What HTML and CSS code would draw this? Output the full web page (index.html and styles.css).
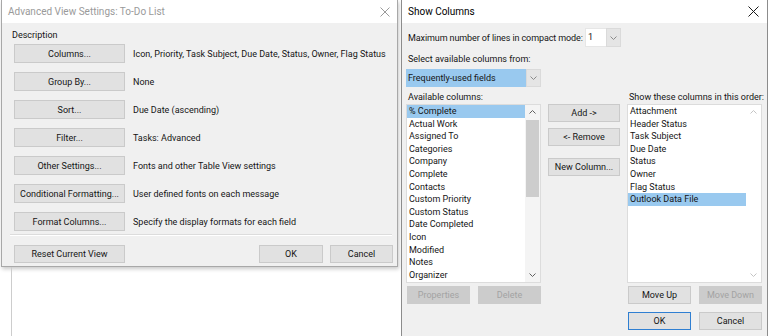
FILE: index.html
```html
<!DOCTYPE html>
<html lang="en">
<head>
  <meta charset="UTF-8">
  <title>Advanced View Settings</title>
  <link rel="stylesheet" href="styles.css">
</head>
<body>
<div class="left-col">
  <div class="dlg dlg-adv">
    <div class="titlebar inactive">
      <span>Advanced View Settings: To-Do List</span>
      <svg class="close" width="10" height="10" viewBox="0 0 10 10"><path d="M0.5 0.5L9.5 9.5M9.5 0.5L0.5 9.5" stroke="#9a9a9a" stroke-width="1"/></svg>
    </div>
    <div class="adv-body">
      <div class="group-label">Description</div>
      <div class="adv-rows">
        <div class="adv-row"><button class="btn btn-wide">Columns...</button><span>Icon, Priority, Task Subject, Due Date, Status, Owner, Flag Status</span></div>
        <div class="adv-row"><button class="btn btn-wide">Group By...</button><span>None</span></div>
        <div class="adv-row"><button class="btn btn-wide">Sort...</button><span>Due Date (ascending)</span></div>
        <div class="adv-row"><button class="btn btn-wide">Filter...</button><span>Tasks: Advanced</span></div>
        <div class="adv-row"><button class="btn btn-wide">Other Settings...</button><span>Fonts and other Table View settings</span></div>
        <div class="adv-row"><button class="btn btn-wide">Conditional Formatting...</button><span>User defined fonts on each message</span></div>
        <div class="adv-row"><button class="btn btn-wide">Format Columns...</button><span>Specify the display formats for each field</span></div>
      </div>
      <div class="separator"></div>
      <div class="adv-footer">
        <button class="btn btn-wide">Reset Current View</button>
        <div class="footer-right">
          <button class="btn btn-ok">OK</button>
          <button class="btn btn-cancel">Cancel</button>
        </div>
      </div>
    </div>
  </div>
  <div class="app-pane"></div>
</div>

<div class="dlg dlg-cols">
  <div class="titlebar">
    <span>Show Columns</span>
    <svg class="close" width="11" height="11" viewBox="0 0 11 11"><path d="M0.5 0.5L10.5 10.5M10.5 0.5L0.5 10.5" stroke="#1a1a1a" stroke-width="1"/></svg>
  </div>
  <div class="cols-body">
    <div class="row-lines">
      <span class="lines-label">Maximum number of lines in compact mode:</span>
      <div class="combo combo-small">
        <span class="combo-val">1</span>
        <span class="combo-btn"><svg width="7" height="4" viewBox="0 0 7 4"><path d="M0.5 0.5L3.5 3.5L6.5 0.5" fill="none" stroke="#8a8a8a"/></svg></span>
      </div>
    </div>
    <div class="lbl lbl-select">Select available columns from:</div>
    <div class="combo combo-wide">
      <span class="combo-val selected">Frequently-used fields</span>
      <span class="combo-btn"><svg width="7" height="4" viewBox="0 0 7 4"><path d="M0.5 0.5L3.5 3.5L6.5 0.5" fill="none" stroke="#8a8a8a"/></svg></span>
    </div>

    <div class="cols-grid">
      <div class="lbl">Available columns:</div>
      <div></div>
      <div class="lbl">Show these columns in this order:</div>

      <div class="listbox">
        <ul class="items">
          <li class="selected">% Complete</li>
          <li>Actual Work</li>
          <li>Assigned To</li>
          <li>Categories</li>
          <li>Company</li>
          <li>Complete</li>
          <li>Contacts</li>
          <li>Custom Priority</li>
          <li>Custom Status</li>
          <li>Date Completed</li>
          <li>Icon</li>
          <li>Modified</li>
          <li>Notes</li>
          <li>Organizer</li>
        </ul>
        <div class="scrollbar">
          <svg class="arrow" width="7" height="4" viewBox="0 0 7 4"><path d="M0.5 3.5L3.5 0.5L6.5 3.5" fill="none" stroke="#606060"/></svg>
          <div class="track"><div class="thumb"></div></div>
          <svg class="arrow" width="7" height="4" viewBox="0 0 7 4"><path d="M0.5 0.5L3.5 3.5L6.5 0.5" fill="none" stroke="#606060"/></svg>
        </div>
      </div>

      <div class="mid-btns">
        <button class="btn">Add -&gt;</button>
        <button class="btn">&lt;- Remove</button>
        <button class="btn btn-newcol">New Column...</button>
      </div>

      <div class="listbox">
        <ul class="items">
          <li>Attachment</li>
          <li>Header Status</li>
          <li>Task Subject</li>
          <li>Due Date</li>
          <li>Status</li>
          <li>Owner</li>
          <li>Flag Status</li>
          <li class="selected">Outlook Data File</li>
        </ul>
        <div class="scrollbar scrollbar-off">
          <svg class="arrow" width="7" height="4" viewBox="0 0 7 4"><path d="M0.5 3.5L3.5 0.5L6.5 3.5" fill="none" stroke="#c4c4c4"/></svg>
          <div class="track"></div>
          <svg class="arrow" width="7" height="4" viewBox="0 0 7 4"><path d="M0.5 0.5L3.5 3.5L6.5 0.5" fill="none" stroke="#c4c4c4"/></svg>
        </div>
      </div>

      <div class="pair">
        <button class="btn" disabled>Properties</button>
        <button class="btn" disabled>Delete</button>
      </div>
      <div></div>
      <div class="pair">
        <button class="btn">Move Up</button>
        <button class="btn" disabled>Move Down</button>
      </div>

      <div></div>
      <div></div>
      <div class="pair">
        <button class="btn btn-default">OK</button>
        <button class="btn">Cancel</button>
      </div>
    </div>
  </div>
</div>
</body>
</html>
```

FILE: styles.css
```css
* {
  box-sizing: border-box;
}
body {
  margin: 0;
  width: 768px;
  height: 336px;
  overflow: hidden;
  background: #fff;
  font-family: Roboto, 'Noto Sans', sans-serif;
  font-size: 9px;
  color: #151515;
  display: flex;
  align-items: stretch;
}
button {
  font-family: inherit;
  font-size: 9px;
  color: #151515;
  margin: 0;
  padding: 0;
}

/* windows */
.left-col {
  width: 400px;
  display: flex;
  flex-direction: column;
}
.app-pane {
  flex: 1;
  margin-left: 11px;
  border-left: 1px solid #cdcdcd;
}
.dlg {
  background: #f0f0f0;
  border: 1px solid #a8a8a8;
  border-top: none;
}
.dlg-adv {
  margin-left: 1px;
  width: 397px;
  box-shadow: 1px 2px 4px rgba(0, 0, 0, 0.22);
}
.dlg-cols {
  margin-left: 1px;
  width: 367px;
  border-color: #8c8c8c;
  border-bottom: none;
}
.titlebar {
  height: 23px;
  background: #fff;
  display: flex;
  align-items: center;
  justify-content: space-between;
  padding: 0 7px 0 6px;
  font-size: 10px;
  color: #000;
}
.titlebar.inactive {
  color: #9a9a9a;
}
.dlg-cols .titlebar {
  padding-left: 6px;
  padding-right: 8px;
}

/* advanced view settings */
.adv-body {
  padding: 6px 4px 3px 12px;
}
.group-label {
  line-height: 12px;
  height: 12px;
  margin-left: -2px;
}
.adv-rows {
  margin-top: 3px;
  display: flex;
  flex-direction: column;
  gap: 9px;
}
.adv-row {
  display: flex;
  align-items: center;
  gap: 8px;
}
.btn {
  height: 18px;
  background: #e1e1e1;
  border: 1px solid #cacaca;
  text-align: center;
  white-space: nowrap;
  line-height: 16px;
}
.btn:disabled {
  background: #cccccc;
  border-color: #cccccc;
  color: #a3a3a3;
}
.btn-wide {
  width: 111px;
  height: 19px;
}
.separator {
  margin: 3px 1px 0 -4px;
  background: #dcdcdc;
  border-bottom: 1px solid #fff;
  height: 2px;
}
.adv-footer {
  margin-top: 9px;
  display: flex;
  justify-content: space-between;
}
.adv-footer .btn {
  height: 18px;
}
.footer-right {
  display: flex;
  gap: 7px;
}
.btn-ok {
  width: 64px;
}
.btn-cancel {
  width: 63px;
}

/* show columns */
.cols-body {
  padding: 5px 4px 0 4px;
}
.row-lines {
  display: flex;
  align-items: center;
  height: 19px;
}
.lines-label {
  width: 179px;
  padding-left: 2px;
  white-space: nowrap;
  letter-spacing: -0.1px;
}
.lbl {
  line-height: 12px;
  height: 12px;
  padding-left: 2px;
  white-space: nowrap;
}
.lbl-select {
  margin-top: 6px;
}
.combo {
  display: flex;
  height: 19px;
}
.combo-small {
  width: 36px;
}
.combo-small .combo-val {
  width: 21px;
  background: #fff;
  border: 1px solid #e6e6e6;
  border-right: none;
}
.combo-val {
  padding-left: 2px;
  line-height: 17px;
  white-space: nowrap;
}
.combo-btn {
  width: 15px;
  background: #e5e5e5;
  border: 1px solid #dadada;
  display: flex;
  align-items: center;
  justify-content: center;
}
.combo-wide {
  margin-top: 4px;
  height: 18px;
  width: 135px;
}
.combo-wide .combo-val {
  width: 120px;
  line-height: 18px;
}
.selected {
  background: #99c9ef;
}
.cols-grid {
  margin-top: 4px;
  display: grid;
  grid-template-columns: 135px 72px 135px;
  grid-template-rows: 13px 179px 21px 26px;
  column-gap: 7px;
}
.listbox {
  background: #fff;
  border: 1px solid #dcdcdc;
  display: flex;
}
.items {
  list-style: none;
  margin: 0;
  padding: 0;
  width: 118px;
}
.items li {
  height: 12.6px;
  line-height: 12.6px;
  padding-left: 2px;
  white-space: nowrap;
}
.scrollbar {
  width: 15px;
  display: flex;
  flex-direction: column;
  align-items: center;
  background: #f4f4f4;
  padding: 5px 0 5px 0;
}
.scrollbar-off {
  background: #fff;
}
.scrollbar .arrow {
  flex: none;
}
.track {
  flex: 1;
  width: 100%;
  padding-top: 6px;
}
.thumb {
  height: 77px;
  background: #cdcdcd;
  margin: 0 1px;
}
.mid-btns {
  display: flex;
  flex-direction: column;
}
.mid-btns .btn {
  margin-bottom: 6px;
}
.mid-btns .btn-newcol {
  margin-top: 6px;
}
.pair {
  display: flex;
  justify-content: space-between;
  align-items: flex-end;
  padding-left: 1px;
}
.pair .btn {
  width: 63px;
}
.btn-default {
  border-color: #2f7fd2;
}
```
